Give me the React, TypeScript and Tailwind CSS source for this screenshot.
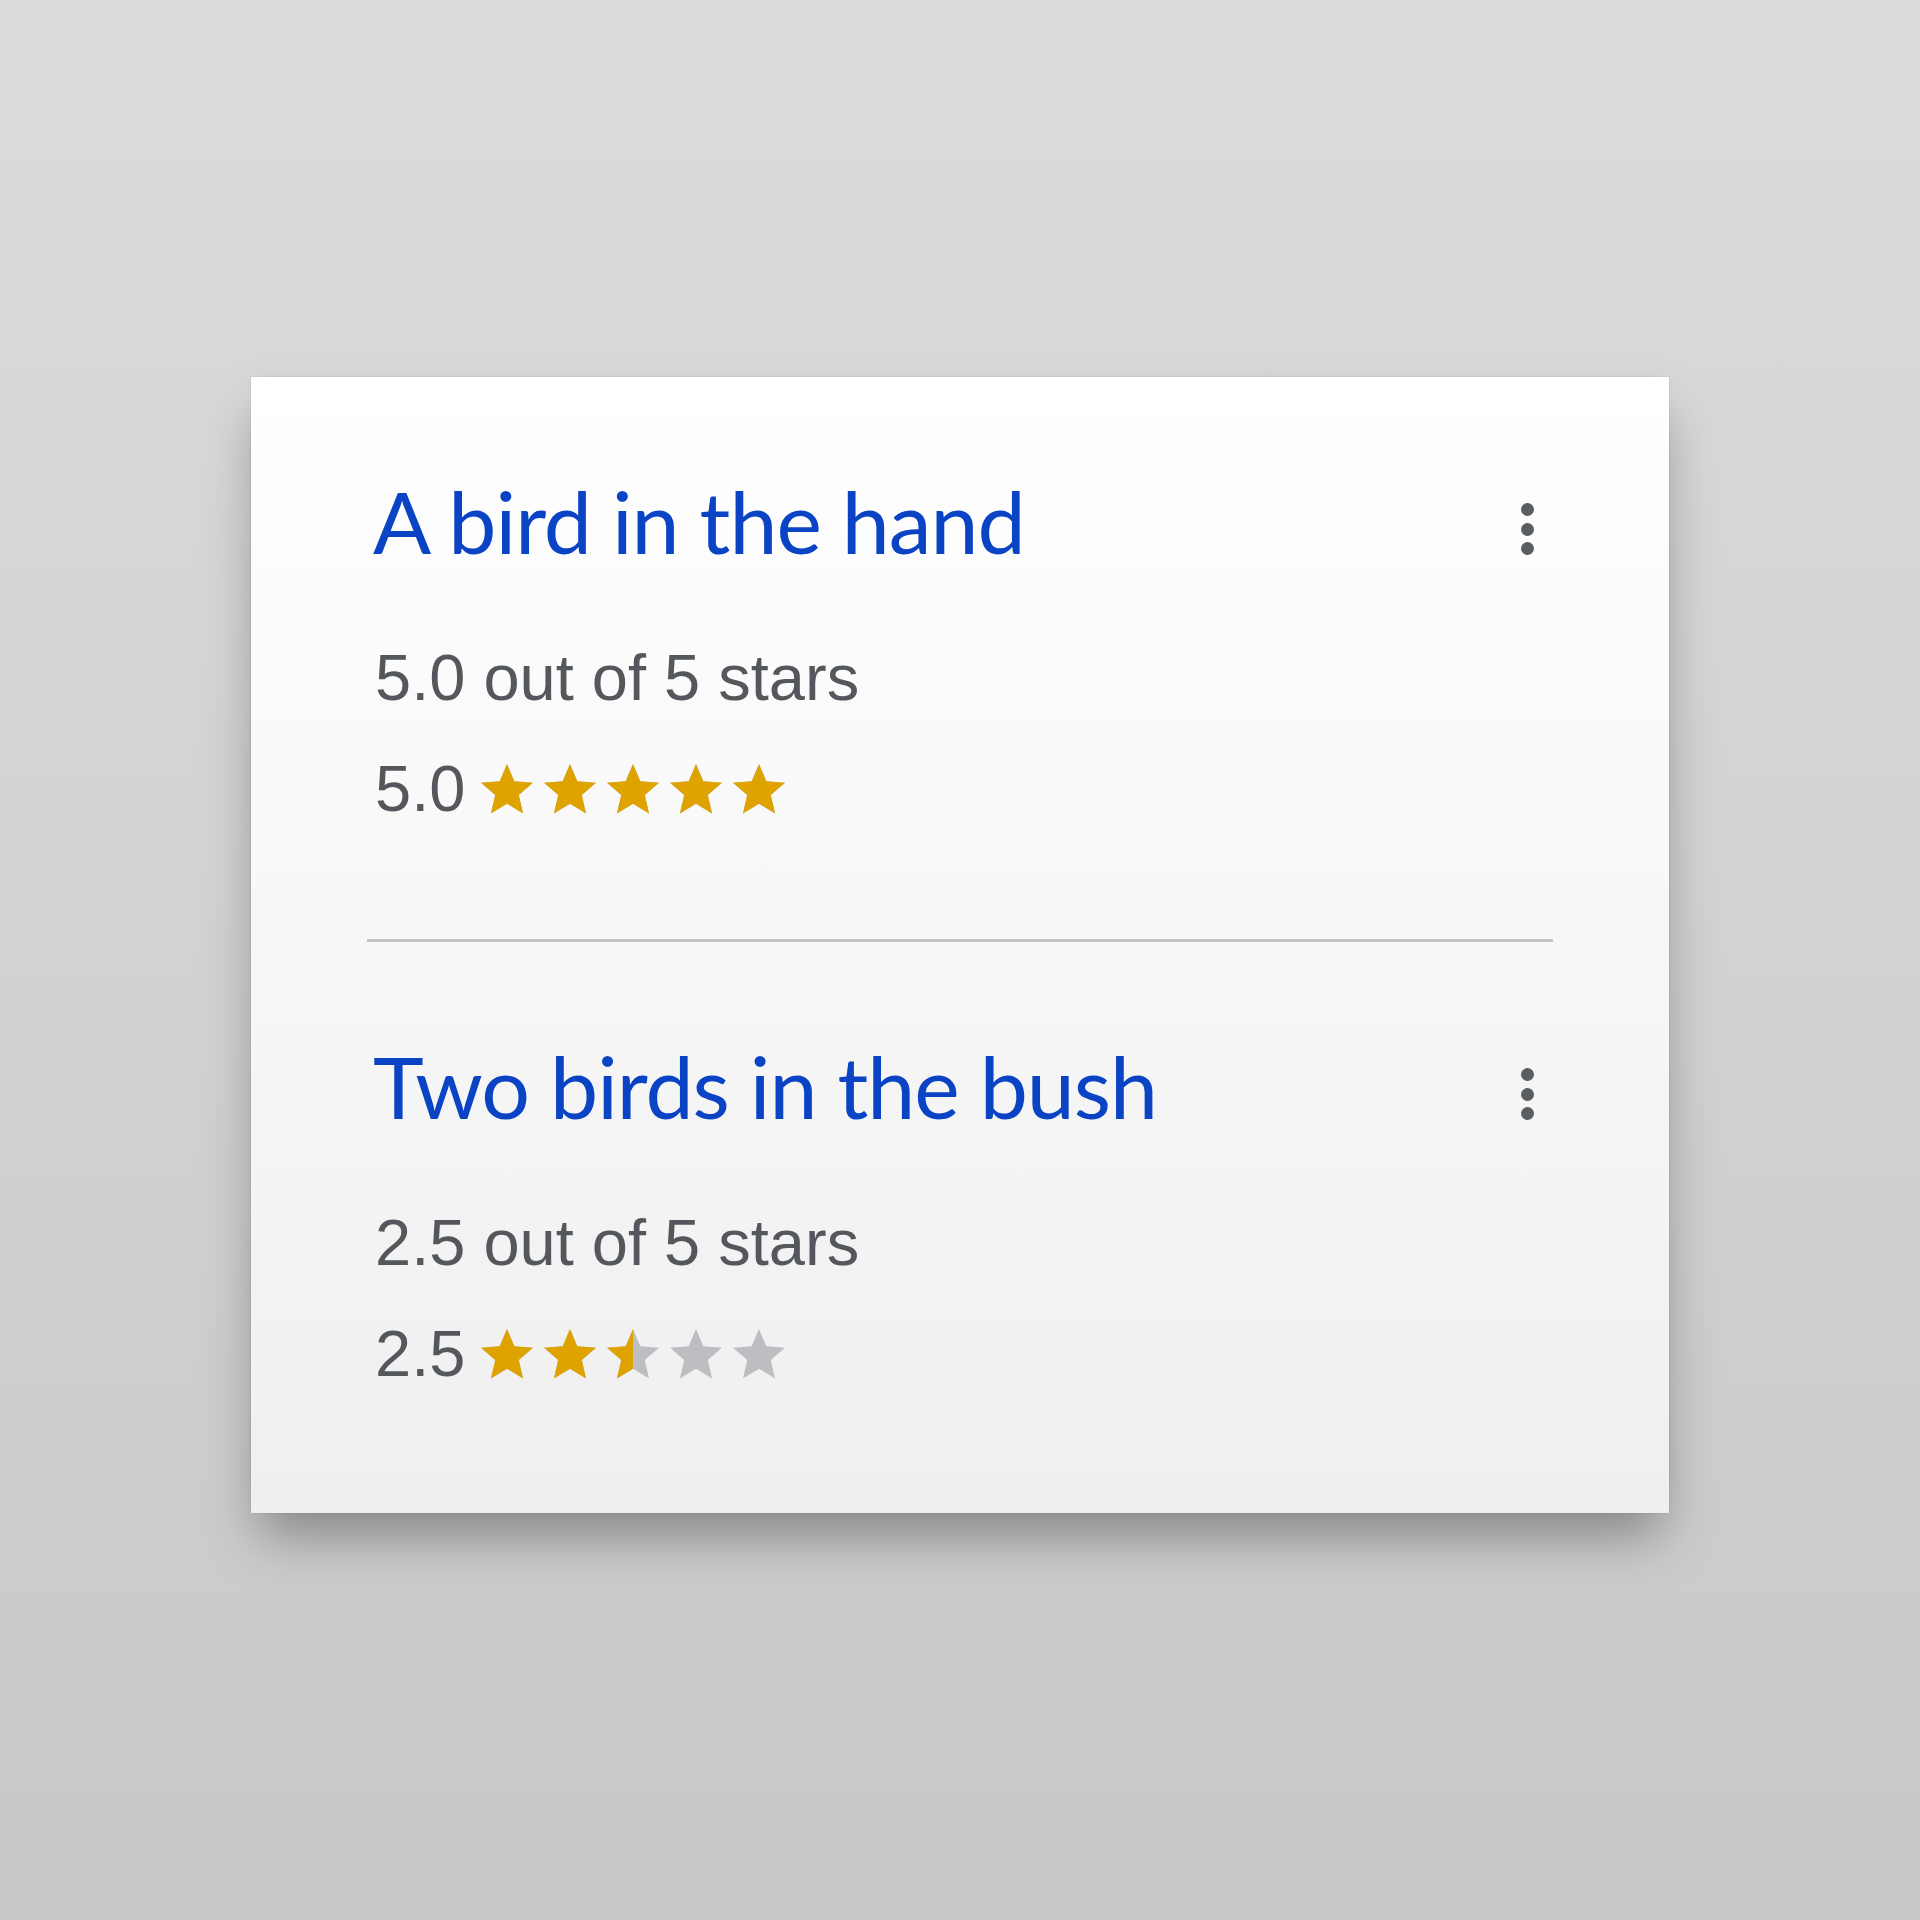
import { Fragment } from "react";

interface Review {
  title: string;
  rating: number;
}

const reviews: Review[] = [
  { title: "A bird in the hand", rating: 5 },
  { title: "Two birds in the bush", rating: 2.5 },
];

const STAR = "M12 17.27L18.18 21l-1.64-7.03L22 9.24l-7.19-.61L12 2 9.19 8.63 2 9.24l5.46 4.73L5.82 21z";

function Star({ fill, id }: { fill: number; id: string }) {
  // fill: 0..1, amount of gold from the left
  return (
    <svg viewBox="2 2 20 19" className="h-[49.4px] w-[52px]">
      <defs>
        <clipPath id={id}>
          <rect x="2" y="0" width={20 * fill} height="24" />
        </clipPath>
      </defs>
      <path d={STAR} fill="#bdbec2" />
      <path d={STAR} fill="#dfa300" clipPath={`url(#${id})`} />
    </svg>
  );
}

function Kebab() {
  return (
    <button
      type="button"
      className="mt-[26px] flex w-[52px] flex-col items-center gap-[6.5px] self-start"
    >
      <span className="h-[13px] w-[13px] rounded-full bg-[#5a5e63]" />
      <span className="h-[13px] w-[13px] rounded-full bg-[#5a5e63]" />
      <span className="h-[13px] w-[13px] rounded-full bg-[#5a5e63]" />
    </button>
  );
}

function ReviewItem({ review, idx }: { review: Review; idx: number }) {
  const label = review.rating.toFixed(1);
  return (
    <div className="flex flex-col">
      <div className="flex items-start justify-between">
        <h2 className="pl-[6px] font-['Lato',sans-serif] text-[86px] leading-[88px] font-normal tracking-[-1px] text-[#0a44c4]">
          {review.title}
        </h2>
        <Kebab />
      </div>
      <p className="mt-[81px] pl-[8px] font-['Liberation_Sans',Arial,sans-serif] text-[65px] leading-[64px] text-[#54585d]">
        {label} out of 5 stars
      </p>
      <div className="mt-[47px] flex items-center pl-[8px]">
        <span className="font-['Liberation_Sans',Arial,sans-serif] text-[65px] leading-[64px] text-[#54585d]">
          {label}
        </span>
        <div className="ml-[16px] flex items-center gap-[11px]">
          {[0, 1, 2, 3, 4].map((i) => (
            <Star
              key={i}
              id={`s${idx}-${i}`}
              fill={Math.max(0, Math.min(1, review.rating - i))}
            />
          ))}
        </div>
      </div>
    </div>
  );
}

export default function App() {
  return (
    <div className="h-[1920px] w-[1920px] bg-gradient-to-b from-[#dcdcdc] to-[#c8c8c8] pl-[251px] pt-[377px]">
      <div className="flex h-[1136px] w-[1418px] flex-col bg-gradient-to-b from-[#ffffff] to-[#efefef] px-[116px] pt-[100px] shadow-[0_30px_50px_-8px_rgba(0,0,0,0.35),0_0_2px_rgba(0,0,0,0.12)]">
        {reviews.map((r, i) => (
          <Fragment key={r.title}>
            {i > 0 && <div className="mb-[100px] mt-[118px] h-[3px] bg-[#c2c2c6]" />}
            <ReviewItem review={r} idx={i} />
          </Fragment>
        ))}
      </div>
    </div>
  );
}
